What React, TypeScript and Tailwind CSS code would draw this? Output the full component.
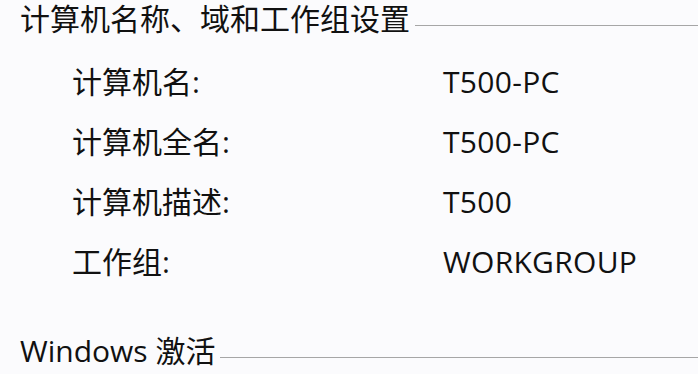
const rows = [
  { label: '计算机名:', value: 'T500-PC' },
  { label: '计算机全名:', value: 'T500-PC' },
  { label: '计算机描述:', value: 'T500' },
  { label: '工作组:', value: 'WORKGROUP' },
]

function SectionTitle({ text }: { text: string }) {
  return (
    <div className="flex items-center">
      <span className="whitespace-nowrap leading-[38px]">{text}</span>
      <div className="ml-[5px] mt-[12px] h-px flex-1 bg-[#a6a6a6]" />
    </div>
  )
}

export default function App() {
  return (
    <div
      className="h-[374px] w-[698px] bg-[#fbfbfd] pl-[20px] text-[30px] text-[#111]"
      style={{ fontFamily: '"Open Sans", "Noto Sans CJK SC", sans-serif' }}
    >
      <SectionTitle text="计算机名称、域和工作组设置" />
      <div className="mt-[13px] pl-[52px]">
        {rows.map((row) => (
          <div key={row.label} className="flex h-[60px] items-center">
            <span className="w-[371px] whitespace-nowrap">{row.label}</span>
            <span className="whitespace-nowrap tracking-[0.3px]">{row.value}</span>
          </div>
        ))}
      </div>
      <div className="mt-[41px]">
        <SectionTitle text="Windows 激活" />
      </div>
    </div>
  )
}
